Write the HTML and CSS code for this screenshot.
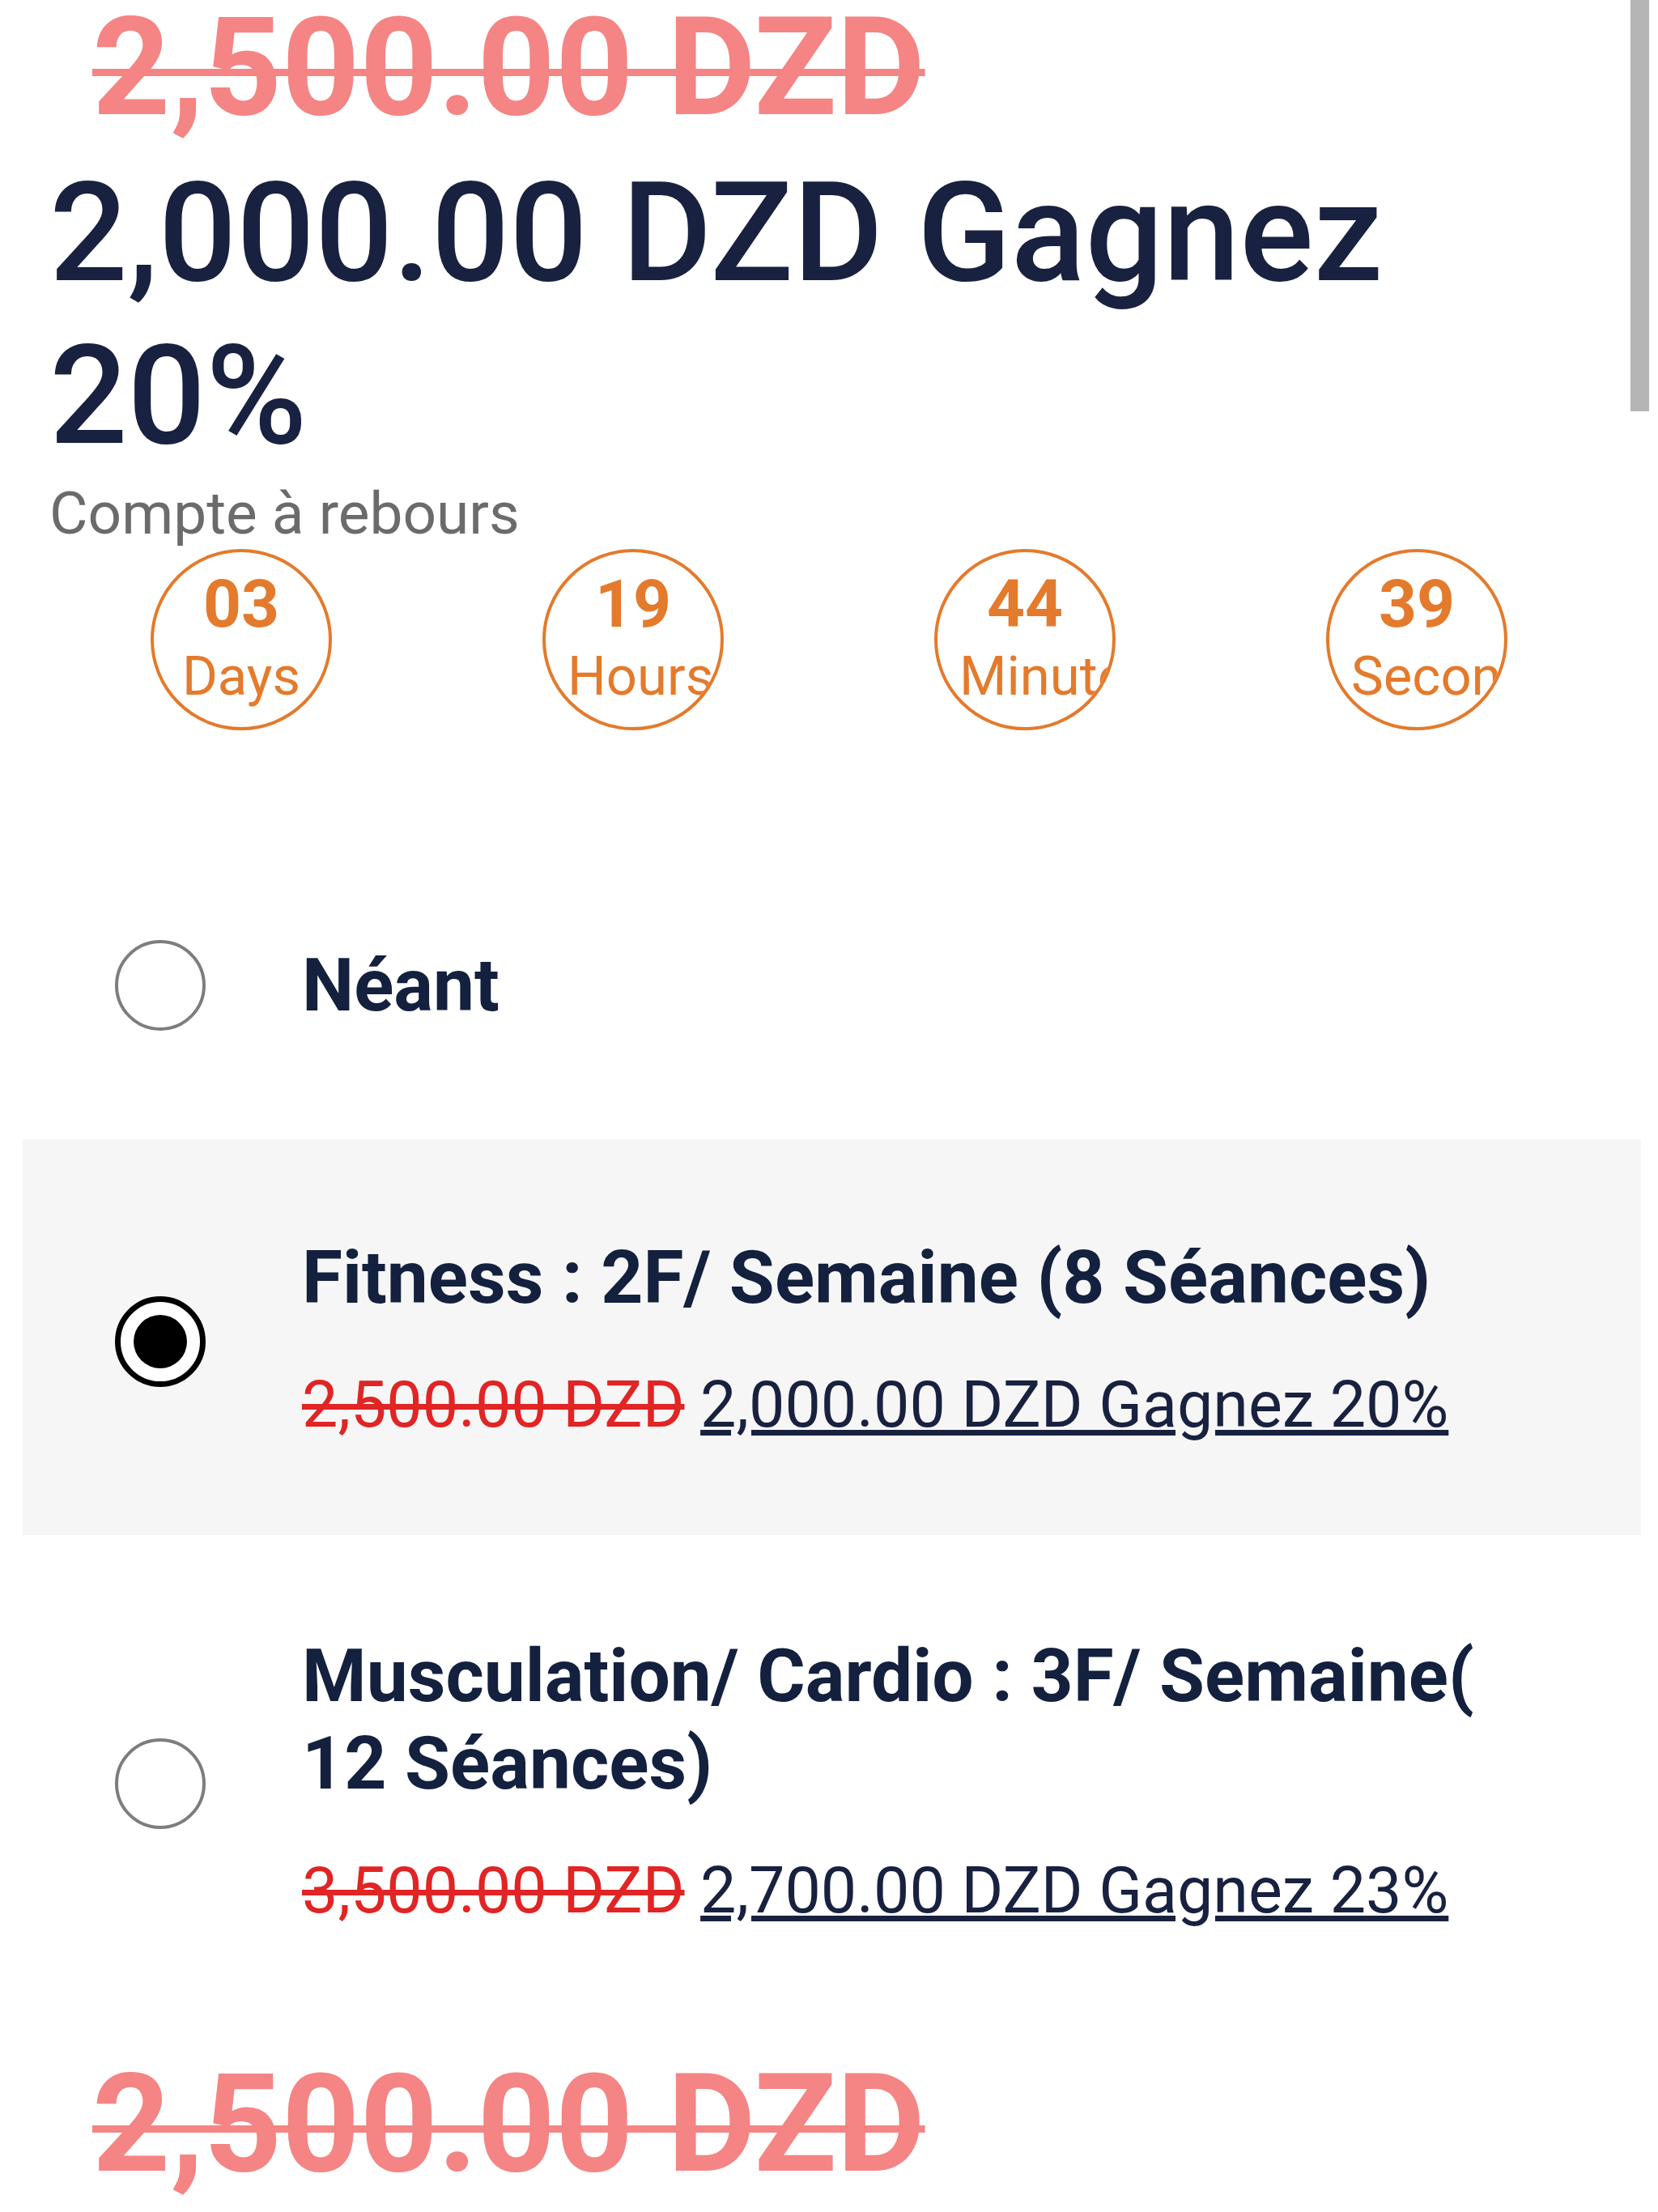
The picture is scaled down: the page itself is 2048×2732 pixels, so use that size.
FILE: index.html
```html
<!DOCTYPE html>
<html lang="fr">
<head>
<meta charset="utf-8">
<title>Offre</title>
<link rel="stylesheet" href="styles.css">
</head>
<body>
<div class="page">
  <div class="old-price">2,500.00 DZD</div>
  <div class="main-price">2,000.00 DZD Gagnez 20%</div>
  <div class="countdown-label">Compte à rebours</div>
  <div class="countdown">
    <div class="cell"><div class="circle"><div class="num">03</div><div class="unit">Days</div></div></div>
    <div class="cell"><div class="circle"><div class="num">19</div><div class="unit">Hours</div></div></div>
    <div class="cell"><div class="circle"><div class="num">44</div><div class="unit">Minutes</div></div></div>
    <div class="cell"><div class="circle"><div class="num">39</div><div class="unit">Seconds</div></div></div>
  </div>

  <div class="options">
    <div class="option option-none">
      <span class="radio"></span>
      <div class="opt-text">
        <div class="opt-title">Néant</div>
      </div>
    </div>
    <div class="option selected">
      <span class="radio checked"></span>
      <div class="opt-text">
        <div class="opt-title">Fitness : 2F/ Semaine (8 Séances)</div>
        <div class="opt-price"><span class="was">2,500.00 DZD</span> <span class="now">2,000.00 DZD Gagnez 20%</span></div>
      </div>
    </div>
    <div class="option option-last">
      <span class="radio"></span>
      <div class="opt-text">
        <div class="opt-title">Musculation/ Cardio : 3F/ Semaine( 12 Séances)</div>
        <div class="opt-price"><span class="was">3,500.00 DZD</span> <span class="now">2,700.00 DZD Gagnez 23%</span></div>
      </div>
    </div>
  </div>

  <div class="old-price bottom">2,500.00 DZD</div>
</div>
<div class="scrollbar"></div>
</body>
</html>
```

FILE: styles.css
```css
html, body {
  margin: 0;
  padding: 0;
  background: #ffffff;
}
body {
  width: 2048px;
  height: 2732px;
  overflow: hidden;
  position: relative;
  font-family: Roboto, "Liberation Sans", sans-serif;
}
.page {
  padding: 0 0 0 61px;
}
.old-price {
  margin-left: 53px;
  font-size: 168px;
  line-height: 168px;
  font-weight: 700;
  color: #f58484;
  text-decoration: line-through;
  text-decoration-thickness: 9px;
  white-space: nowrap;
}
.old-price.bottom {
  margin-top: 44px;
}
.main-price {
  margin-top: 20px;
  width: 1900px;
  font-size: 170px;
  line-height: 201px;
  font-weight: 500;
  color: #18213f;
}
.countdown-label {
  font-size: 73px;
  line-height: 88px;
  color: #6b6b6b;
}
.countdown {
  display: grid;
  grid-template-columns: repeat(4, 484px);
  margin-left: -5px;
}
.cell {
  display: flex;
  justify-content: center;
}
.circle {
  box-sizing: border-box;
  width: 224px;
  height: 224px;
  border: 4px solid #e47a2c;
  border-radius: 50%;
  overflow: hidden;
  padding: 19px 27px 0;
  text-align: center;
  color: #e47a2c;
}
.num {
  font-size: 82px;
  line-height: 90px;
  font-weight: 700;
}
.unit {
  margin-top: 4px;
  font-size: 67px;
  line-height: 80px;
  white-space: nowrap;
}
.options {
  margin: 142px 0 0 -33px;
  width: 1999px;
}
.option {
  display: flex;
  align-items: center;
  padding: 117px 127px 107px 114px;
}
.option-none {
  padding-bottom: 134px;
}
.option-last {
  padding-top: 120px;
}
.option.selected {
  background: #f6f6f6;
}
.radio {
  flex: none;
  box-sizing: border-box;
  width: 112px;
  height: 112px;
  border: 4px solid #7d7d7d;
  border-radius: 50%;
  background: #ffffff;
  display: flex;
  align-items: center;
  justify-content: center;
  margin-right: 119px;
}
.radio.checked {
  border: 7px solid #000000;
}
.radio.checked::after {
  content: "";
  width: 66px;
  height: 66px;
  border-radius: 50%;
  background: #000000;
}
.opt-text {
  flex: 1;
  min-width: 0;
}
.opt-title {
  font-size: 91px;
  line-height: 108px;
  font-weight: 700;
  color: #13203e;
}
.opt-price {
  margin-top: 49px;
  font-size: 79px;
  line-height: 108px;
  white-space: nowrap;
}
.was {
  color: #e12424;
  text-decoration: line-through;
}
.now {
  color: #18213f;
  text-decoration: underline;
}
.scrollbar {
  position: absolute;
  top: 0;
  right: 11px;
  width: 23px;
  height: 508px;
  background: #b5b5b5;
}
```
